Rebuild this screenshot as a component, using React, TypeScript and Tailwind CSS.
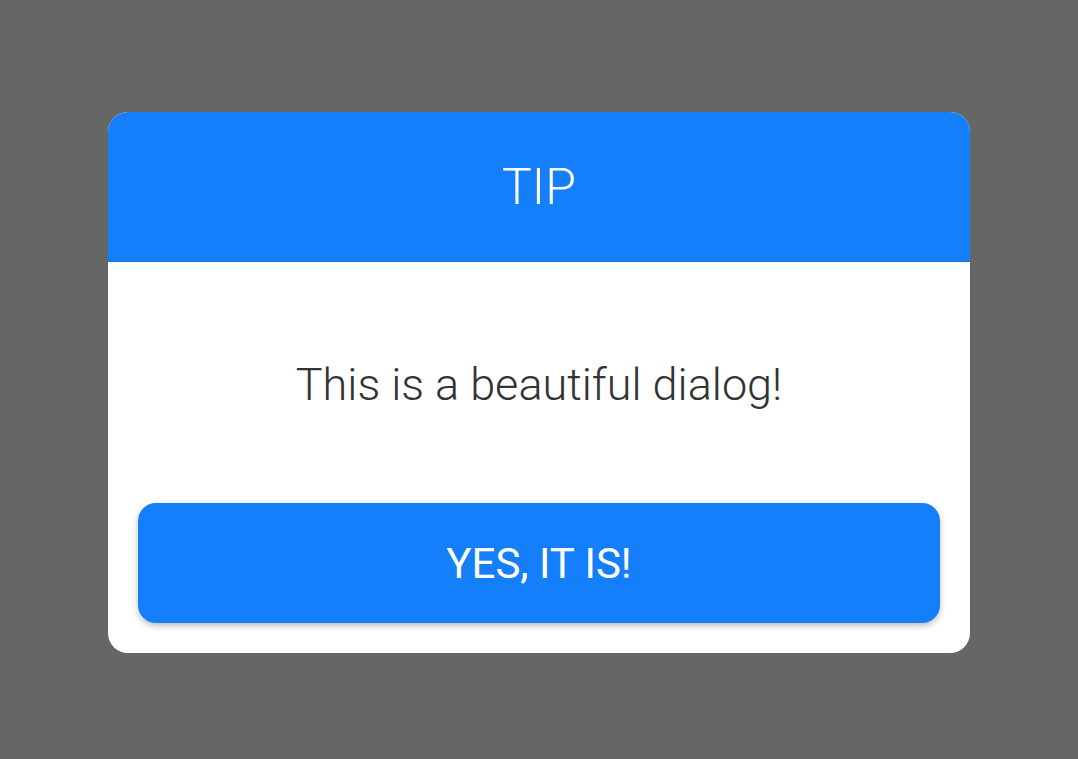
export default function App() {
  return (
    <div
      className="flex h-[759px] w-full items-center justify-center bg-[#666666] pt-[6px]"
      style={{ fontFamily: "Roboto, 'Liberation Sans', sans-serif" }}
    >
      <div className="flex h-[541px] w-[862px] flex-col overflow-hidden rounded-[20px] bg-white">
        {/* Header */}
        <div className="flex h-[150px] items-center justify-center border-b border-[#1273e6] bg-[#157ffb]">
          <h2 className="text-[50px] font-light leading-none text-white">TIP</h2>
        </div>

        {/* Message */}
        <div className="flex flex-1 items-center justify-center pt-[4px]">
          <p className="text-[45px] font-light leading-none text-[#333333]">
            This is a beautiful dialog!
          </p>
        </div>

        {/* Action */}
        <div className="px-[30px] pb-[30px]">
          <button className="flex h-[120px] w-full items-center justify-center rounded-[18px] bg-[#157ffb] text-[42px] font-normal text-white shadow-[0_3px_6px_rgba(0,0,0,0.25)]">
            YES, IT IS!
          </button>
        </div>
      </div>
    </div>
  );
}
